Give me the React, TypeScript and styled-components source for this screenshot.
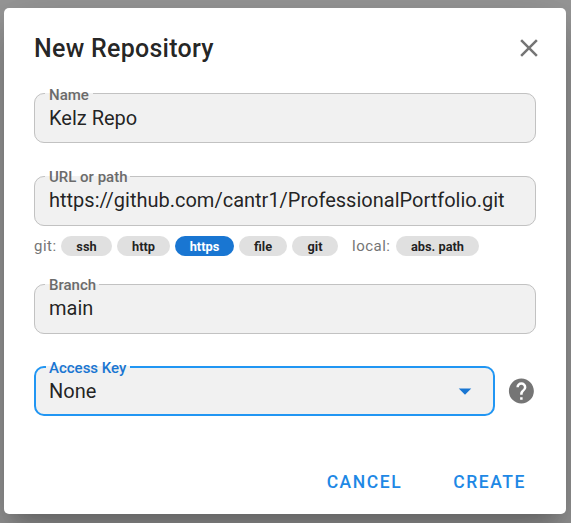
import React from 'react';
import styled, { createGlobalStyle } from 'styled-components';

const GlobalStyle = createGlobalStyle`
  * { box-sizing: border-box; }
  html, body { margin: 0; height: 100%; overflow: hidden; }
  body {
    background: #999;
    font-family: Roboto, "Liberation Sans", sans-serif;
    color: rgba(0, 0, 0, 0.87);
  }
  button { font-family: inherit; border: 0; padding: 0; cursor: pointer; }
`;

const Backdrop = styled.div`
  height: 523px;
  padding: 8px 5px 9px 4px;
`;

const Dialog = styled.form`
  display: flex;
  flex-direction: column;
  height: 506px;
  padding: 0 30px;
  border-radius: 5px;
  background: #fff;
  box-shadow:
    0 13.75px 18.75px -8.75px rgba(0, 0, 0, 0.2),
    0 30px 47.5px 3.75px rgba(0, 0, 0, 0.14),
    0 11.25px 57.5px 10px rgba(0, 0, 0, 0.12);
`;

const Header = styled.header`
  display: flex;
  align-items: center;
  justify-content: space-between;
  height: 80px;
  margin-bottom: 5px;
`;

const Title = styled.h1`
  margin: 2px 0 0;
  font-size: 25px;
  line-height: 40px;
  font-weight: 500;
  letter-spacing: 0.011em;
`;

const CloseButton = styled.button`
  display: flex;
  margin-right: -8px;
  background: none;
  color: #757575;
`;

const Field = styled.label<{ $gap: number }>`
  position: relative;
  display: flex;
  align-items: center;
  width: 100%;
  height: 50px;
  margin-bottom: ${(p) => p.$gap}px;
  padding: 0 15px;
  border-radius: 10px;
  background: #f1f1f1;
`;

const Outline = styled.fieldset<{ $active?: boolean }>`
  position: absolute;
  inset: 0;
  margin: 0;
  padding: 0 0 0 10px;
  border: ${(p) => (p.$active ? '2px solid #2196f3' : '1px solid #c2c2c2')};
  border-radius: 10px;
  pointer-events: none;
`;

const Notch = styled.legend<{ $width: number }>`
  width: ${(p) => p.$width}px;
  height: 0;
  padding: 0;
  line-height: 0;
`;

const FloatingLabel = styled.span<{ $active?: boolean; $raised?: boolean }>`
  position: absolute;
  left: 15px;
  top: ${(p) => (p.$raised ? -9 : -8)}px;
  font-size: 15px;
  line-height: 20px;
  font-weight: 500;
  white-space: nowrap;
  color: ${(p) => (p.$active ? '#1976d2' : '#6b6b6b')};
`;

const Value = styled.span<{ $raised?: boolean }>`
  flex: 1;
  padding-bottom: ${(p) => (p.$raised ? 2 : 0)}px;
  font-size: 20px;
  line-height: 25px;
  white-space: nowrap;
`;

const Schemes = styled.div`
  display: flex;
  align-items: center;
  height: 20px;
  margin-bottom: 28px;
`;

const SchemeLabel = styled.span<{ $width: number; $start?: number }>`
  width: ${(p) => p.$width}px;
  margin-left: ${(p) => p.$start ?? 0}px;
  font-size: 15px;
  line-height: 20px;
  letter-spacing: 0.0333em;
  white-space: nowrap;
  color: #757575;
`;

const Chip = styled.button<{ $width: number; $selected?: boolean }>`
  width: ${(p) => p.$width}px;
  height: 20px;
  margin-right: 5px;
  padding-top: 1px;
  border-radius: 10px;
  font-size: 12.8px;
  line-height: 19px;
  font-weight: 700;
  color: ${(p) => (p.$selected ? '#fff' : 'rgba(0, 0, 0, 0.87)')};
  background: ${(p) => (p.$selected ? '#1976d2' : '#e0e0e0')};
`;

const KeyRow = styled.div`
  display: flex;
  align-items: center;
  gap: 11px;
`;

const HelpIcon = styled.svg`
  flex: none;
`;

const Actions = styled.footer`
  display: flex;
  justify-content: flex-end;
  gap: 51px;
  margin-top: 53px;
  padding-right: 10px;
`;

const Action = styled.button`
  background: none;
  color: #1e88e5;
  font-size: 17.5px;
  line-height: 26px;
  font-weight: 500;
  letter-spacing: 0.0892857em;
  text-transform: uppercase;
`;

type FieldProps = {
  label: string;
  value: string;
  notch: number;
  gap?: number;
  active?: boolean;
  raised?: boolean;
  children?: React.ReactNode;
};

const OutlinedField = ({ label, value, notch, gap = 0, active, raised, children }: FieldProps) => (
  <Field $gap={gap}>
    <Outline $active={active}>
      <Notch $width={notch} />
    </Outline>
    <FloatingLabel $active={active} $raised={raised}>{label}</FloatingLabel>
    <Value $raised={raised}>{value}</Value>
    {children}
  </Field>
);

const gitSchemes = [
  { name: 'ssh', width: 51 },
  { name: 'http', width: 53 },
  { name: 'https', width: 59 },
  { name: 'file', width: 48 },
  { name: 'git', width: 46 },
];

export default function App() {
  return (
    <>
      <GlobalStyle />
      <Backdrop>
        <Dialog onSubmit={(e) => e.preventDefault()}>
          <Header>
            <Title>New Repository</Title>
            <CloseButton type="button" aria-label="Close">
              <svg width="30" height="30" viewBox="0 0 24 24" fill="currentColor">
                <path d="M19 6.41L17.59 5L12 10.59L6.41 5L5 6.41L10.59 12L5 17.59L6.41 19L12 13.41L17.59 19L19 17.59L13.41 12L19 6.41Z" />
              </svg>
            </CloseButton>
          </Header>
          <OutlinedField label="Name" value="Kelz Repo" notch={48} gap={33} />
          <OutlinedField label="URL or path" value="https://github.com/cantr1/ProfessionalPortfolio.git" notch={85} gap={10} raised />
          <Schemes>
            <SchemeLabel $width={27}>git:</SchemeLabel>
            {gitSchemes.map((s) => (
              <Chip key={s.name} type="button" $width={s.width} $selected={s.name === 'https'}>
                {s.name}
              </Chip>
            ))}
            <SchemeLabel $width={44} $start={9}>local:</SchemeLabel>
            <Chip type="button" $width={83}>abs. path</Chip>
          </Schemes>
          <OutlinedField label="Branch" value="main" notch={54} gap={32} raised />
          <KeyRow>
            <OutlinedField label="Access Key" value="None" notch={84} active>
              <svg width="30" height="30" viewBox="0 0 24 24" fill="#1976d2">
                <path d="M7 10L12 15L17 10H7Z" />
              </svg>
            </OutlinedField>
            <HelpIcon width="30" height="30" viewBox="-0.3 0 24 24" fill="#757575">
              <path d="M15.07 11.25L14.17 12.17C13.45 12.89 13 13.5 13 15H11V14.5C11 13.39 11.45 12.39 12.17 11.67L13.41 10.41C13.78 10.05 14 9.55 14 9C14 7.89 13.1 7 12 7A2 2 0 0 0 10 9H8A4 4 0 0 1 12 5A4 4 0 0 1 16 9C16 9.88 15.64 10.67 15.07 11.25M13 19H11V17H13M12 2A10 10 0 0 0 2 12A10 10 0 0 0 12 22A10 10 0 0 0 22 12C22 6.47 17.5 2 12 2Z" />
            </HelpIcon>
          </KeyRow>
          <Actions>
            <Action type="button">Cancel</Action>
            <Action type="submit">Create</Action>
          </Actions>
        </Dialog>
      </Backdrop>
    </>
  );
}
